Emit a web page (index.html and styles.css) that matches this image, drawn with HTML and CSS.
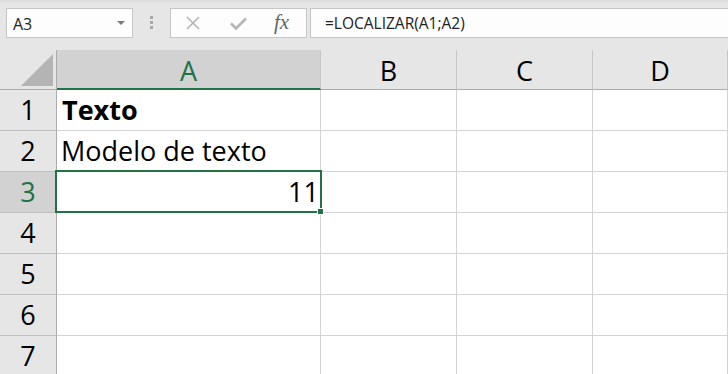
FILE: index.html
```html
<!DOCTYPE html>
<html lang="pt">
<head>
  <meta charset="UTF-8">
  <meta name="viewport" content="width=device-width, initial-scale=1.0">
  <title>LOCALIZAR</title>
  <link rel="stylesheet" href="styles.css">
</head>
<body>
  <div class="toolbar">
    <div class="namebox">
      <span class="namebox-text">A3</span>
      <span class="caret"></span>
    </div>
    <div class="grip"><i></i><i></i><i></i></div>
    <div class="fxbox">
      <svg class="icon-cancel" width="14" height="14" viewBox="0 0 14 14">
        <path d="M1 1 L13 13 M13 1 L1 13" stroke="#b5b5b5" stroke-width="1.6" fill="none"/>
      </svg>
      <svg class="icon-enter" width="17" height="13" viewBox="0 0 17 13">
        <polyline points="1,6.5 6,11.5 16,1.5" stroke="#b5b5b5" stroke-width="2.6" fill="none"/>
      </svg>
      <span class="fx">fx</span>
    </div>
    <div class="formula">=LOCALIZAR(A1;A2)</div>
  </div>

  <div class="sheet">
    <div class="grid">
      <div class="corner">
        <svg width="57" height="39" viewBox="0 0 57 39">
          <polygon points="53,4 53,36 21,36" fill="#b4b4b4"/>
        </svg>
      </div>
      <div class="colhead selected">A</div>
      <div class="colhead">B</div>
      <div class="colhead">C</div>
      <div class="colhead">D</div>

      <div class="rowhead">1</div>
      <div class="cell bold">Texto</div>
      <div class="cell"></div><div class="cell"></div><div class="cell"></div>

      <div class="rowhead">2</div>
      <div class="cell">Modelo de texto</div>
      <div class="cell"></div><div class="cell"></div><div class="cell"></div>

      <div class="rowhead selected">3</div>
      <div class="cell number">11</div>
      <div class="cell"></div><div class="cell"></div><div class="cell"></div>

      <div class="rowhead">4</div>
      <div class="cell"></div><div class="cell"></div><div class="cell"></div><div class="cell"></div>

      <div class="rowhead">5</div>
      <div class="cell"></div><div class="cell"></div><div class="cell"></div><div class="cell"></div>

      <div class="rowhead">6</div>
      <div class="cell"></div><div class="cell"></div><div class="cell"></div><div class="cell"></div>

      <div class="rowhead">7</div>
      <div class="cell"></div><div class="cell"></div><div class="cell"></div><div class="cell"></div>
    </div>

    <div class="selection"><span class="handle"></span></div>
  </div>
</body>
</html>
```

FILE: styles.css
```css
:root {
  --chrome: #e6e6e6;
  --chrome-dark: #d2d2d2;
  --green: #217346;
  --grid: #d4d4d4;
  --head-line: #ababab;
  --box-line: #c6c6c6;
}

body {
  margin: 0;
  width: 728px;
  height: 374px;
  overflow: hidden;
  background: var(--chrome);
  font-family: 'Open Sans', 'Liberation Sans', sans-serif;
  color: #000;
}

/* formula bar */
.toolbar {
  height: 50px;
  box-sizing: border-box;
  padding-top: 8px;
  display: flex;
  align-items: flex-start;
  background: linear-gradient(180deg, #dadada 0px, var(--chrome) 3px);
}

.namebox {
  margin-left: 6px;
  width: 127px;
  height: 30px;
  box-sizing: border-box;
  border: 1px solid var(--box-line);
  background: #fdfdfd;
  display: flex;
  align-items: center;
  justify-content: space-between;
  padding: 1px 7px 0 6px;
}

.namebox-text {
  font-size: 16px;
  color: #222;
}

.caret {
  width: 0;
  height: 0;
  border-left: 4px solid transparent;
  border-right: 4px solid transparent;
  border-top: 4px solid #7a7a7a;
  margin-top: -1px;
}

.grip {
  margin: 8px 0 0 17px;
  display: flex;
  flex-direction: column;
  gap: 2px;
}

.grip i {
  width: 3px;
  height: 3px;
  background: #a8a8a8;
}

.fxbox {
  margin-left: 17px;
  width: 137px;
  height: 30px;
  box-sizing: border-box;
  border: 1px solid var(--box-line);
  background: #fdfdfd;
  display: flex;
  align-items: center;
  padding-left: 15px;
}

.icon-enter {
  margin-left: 30px;
}

.fx {
  margin-left: 27px;
  font-family: 'Liberation Serif', serif;
  font-style: italic;
  font-size: 21px;
  color: #656565;
  margin-top: -2px;
}

.formula {
  flex: 1;
  margin-left: 3px;
  margin-right: -2px;
  height: 30px;
  box-sizing: border-box;
  border: 1px solid var(--box-line);
  background: #fdfdfd;
  padding: 4px 0 0 14px;
  font-size: 15.5px;
  line-height: 21px;
  color: #222;
}

/* worksheet */
.sheet {
  position: relative;
}

.grid {
  display: grid;
  grid-template-columns: 57px 264px 136px 136px 1fr;
  grid-template-rows: 40px repeat(7, 41px);
}

.corner {
  box-sizing: border-box;
  border-right: 1px solid var(--head-line);
  border-bottom: 1px solid var(--head-line);
  background: var(--chrome);
}

.corner svg {
  display: block;
}

.colhead {
  box-sizing: border-box;
  border-right: 1px solid var(--box-line);
  border-bottom: 1px solid var(--head-line);
  background: var(--chrome);
  text-align: center;
  font-size: 27px;
  padding-top: 3px;
  line-height: 36px;
}

.colhead.selected {
  background: var(--chrome-dark);
  border-bottom: 2px solid var(--green);
  color: var(--green);
}

.rowhead {
  box-sizing: border-box;
  border-right: 1px solid var(--head-line);
  border-bottom: 1px solid #bfbfbf;
  background: var(--chrome);
  text-align: center;
  font-size: 27px;
  line-height: 39px;
}

.rowhead.selected {
  background: var(--chrome-dark);
  color: var(--green);
}

.cell {
  box-sizing: border-box;
  border-right: 1px solid var(--grid);
  border-bottom: 1px solid var(--grid);
  background: #fff;
  font-size: 27px;
  line-height: 39px;
  padding: 0 1px 0 4px;
  white-space: nowrap;
}

.cell.bold {
  font-weight: bold;
  padding-left: 5px;
}

.cell.number {
  text-align: right;
}

.selection {
  position: absolute;
  left: 55px;
  top: 120px;
  width: 267px;
  height: 43px;
  box-sizing: border-box;
  border: 2px solid var(--green);
}

.handle {
  position: absolute;
  right: -4px;
  bottom: -4px;
  width: 5px;
  height: 5px;
  background: var(--green);
  border: 1px solid #fff;
}
```
